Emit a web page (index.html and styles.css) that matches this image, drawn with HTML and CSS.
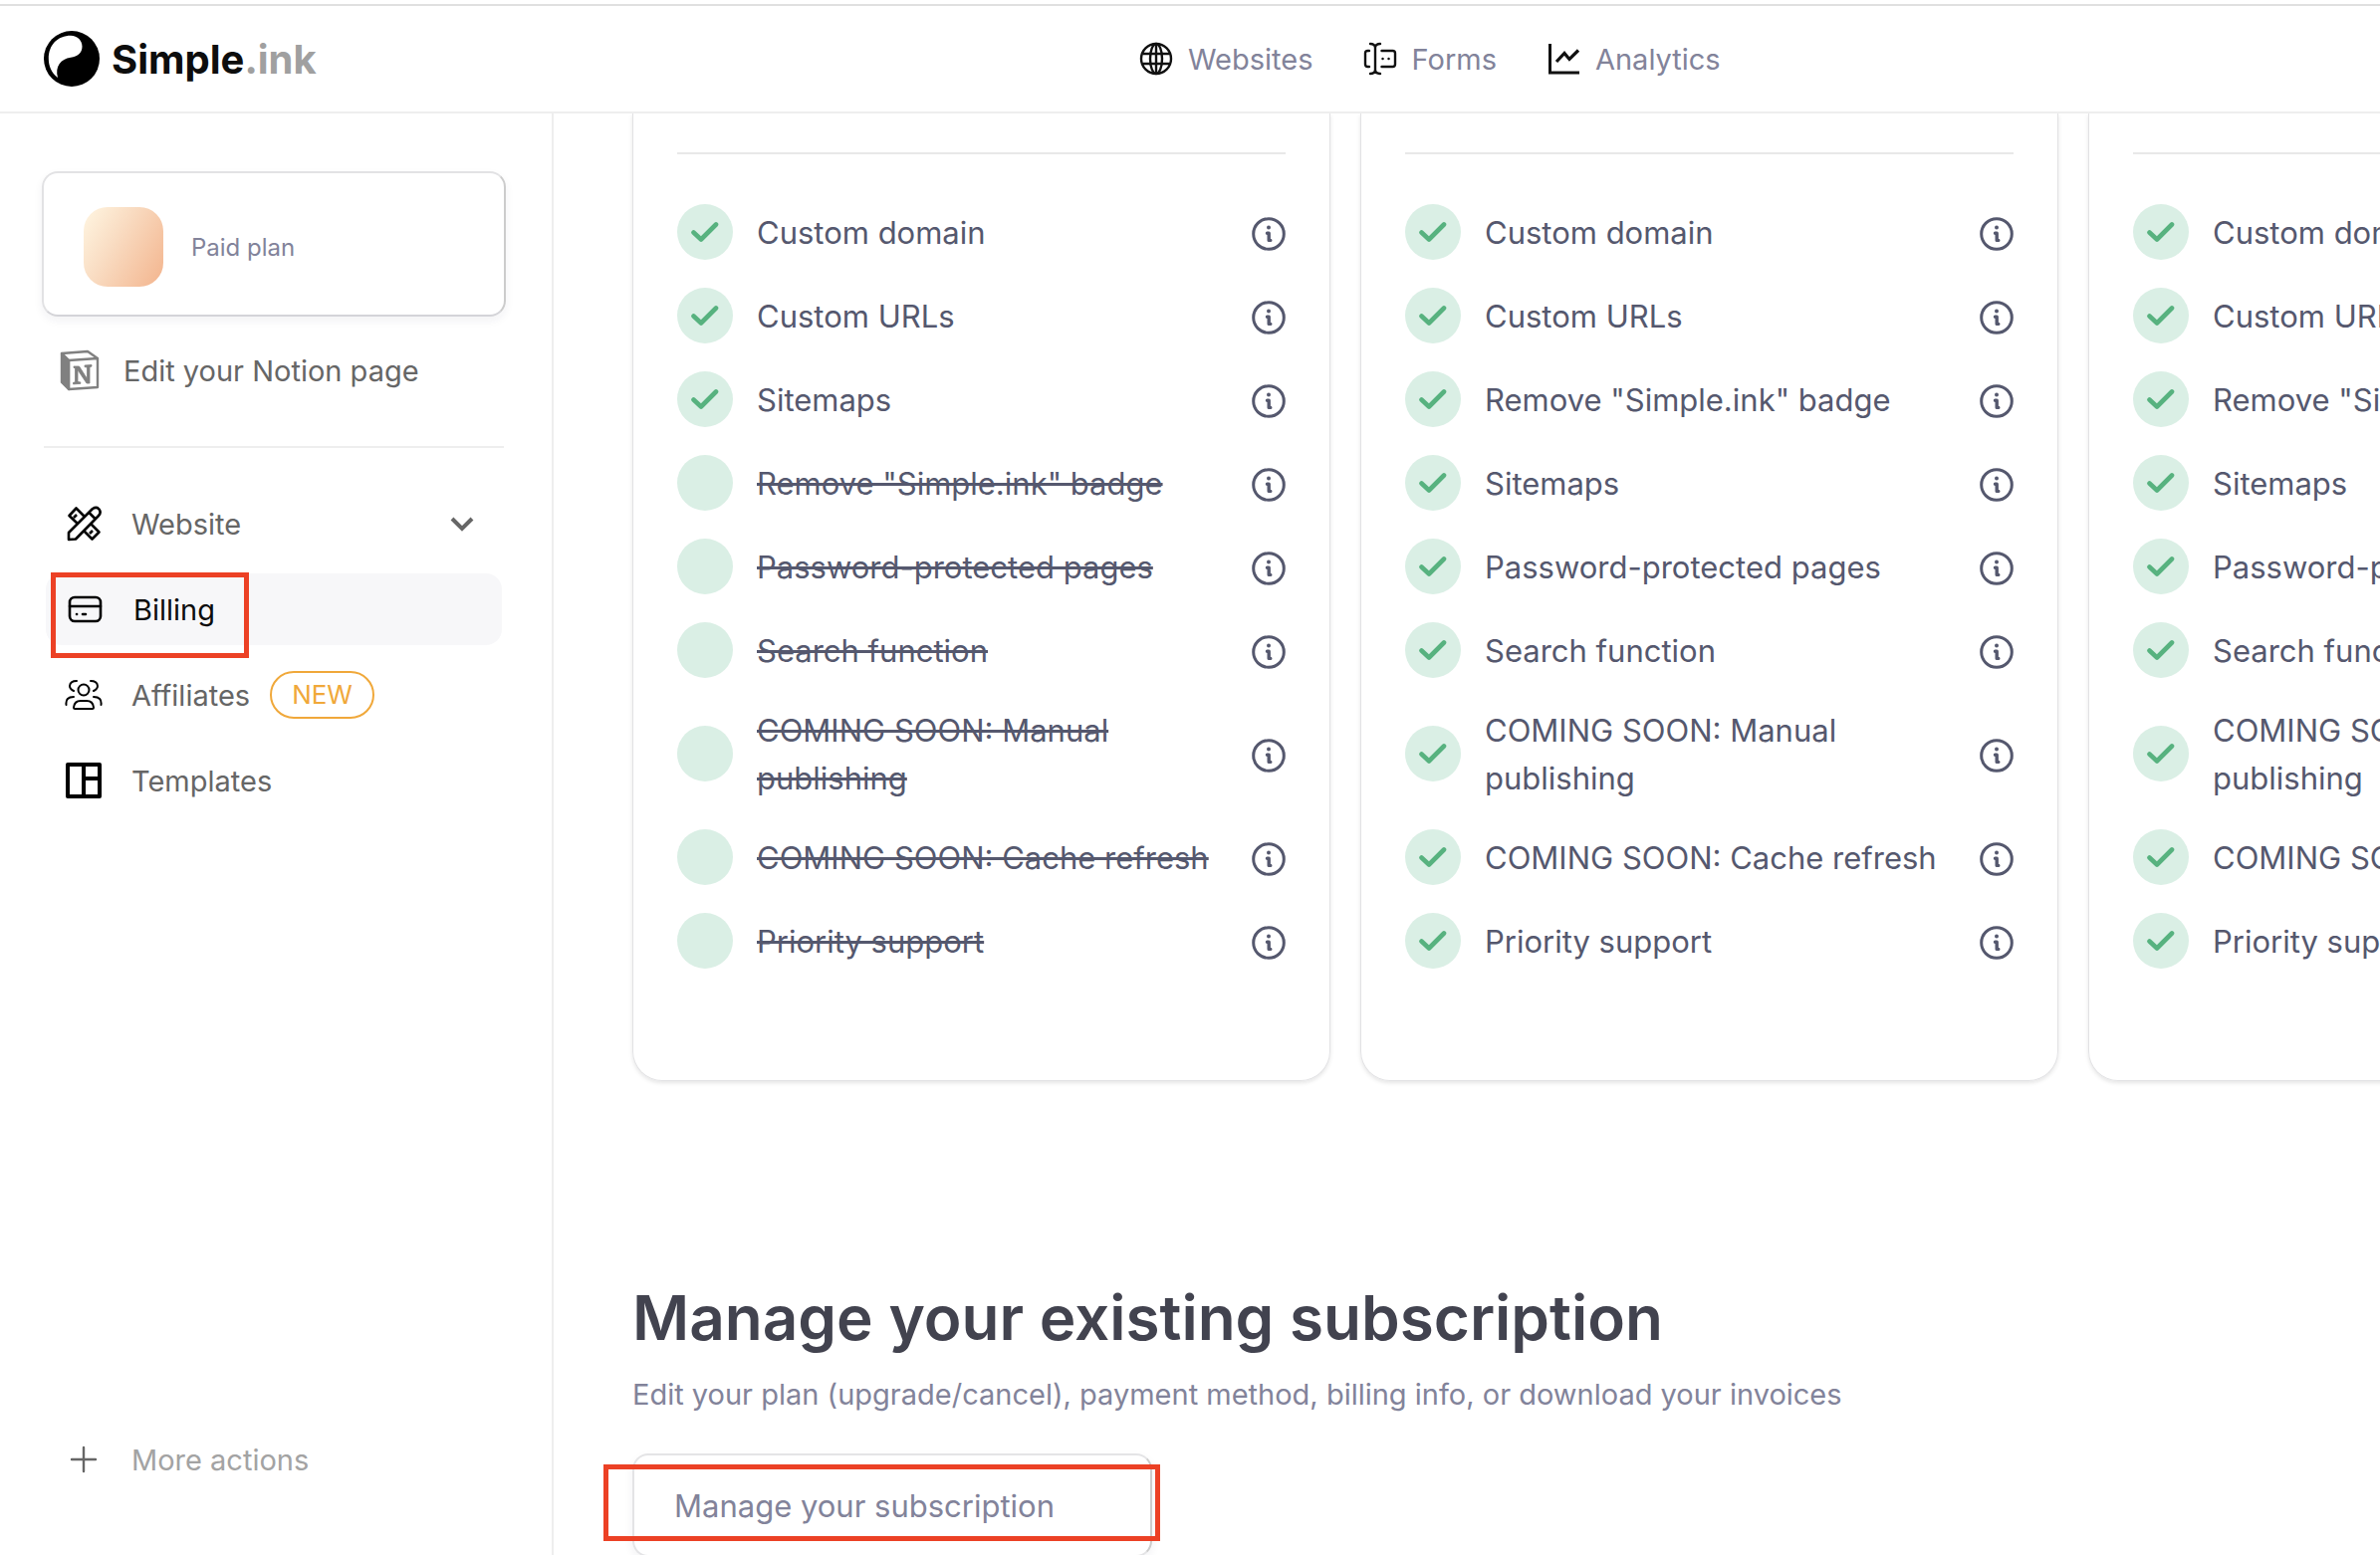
FILE: index.html
```html
<!DOCTYPE html>
<html lang="en">
  <head>
    <meta charset="UTF-8" />
    <meta name="viewport" content="width=device-width, initial-scale=1.0" />
    <title>Billing - Simple.ink</title>
    <link rel="stylesheet" href="styles.css">
  </head>
  <body>
    <!-- Shared icons -->
    <svg class="sprite" aria-hidden="true">
      <symbol id="check" viewBox="0 0 28 20">
        <path d="M2.5 10.5 10 17.5 25 2.5" fill="none" stroke="#57b27f" stroke-width="4.6" stroke-linecap="round" stroke-linejoin="round" />
      </symbol>
      <symbol id="info" viewBox="0 0 34 34">
        <circle cx="17" cy="17" r="15.3" fill="none" stroke="currentColor" stroke-width="3" />
        <circle cx="17" cy="10.5" r="2" fill="currentColor" />
        <path d="M15.5 16.2h1.7v7.2h1.6" fill="none" stroke="currentColor" stroke-width="3.400" stroke-linecap="round" stroke-linejoin="round" />
      </symbol>
    </svg>

    <header class="header">
      <a class="logo" href="#">
        <svg width="56" height="56" viewBox="0 0 56 56">
          <circle cx="28" cy="28" r="28" />
          <path fill="#fff" d="M14 47C7.500 42 4.800 35 4.800 28 4.800 14 14 4.800 27 4.800c7 0 11.500 5 11.500 11 0 6.500-4.500 10-11.500 11-10 1.400-16 9-13 20.200z" />
        </svg>
        <span class="logo-text">Simple<span class="logo-tld">.ink</span></span>
      </a>
      <nav class="nav">
        <a href="#">
          <svg width="34" height="34" viewBox="0 0 34 34" fill="none" stroke="#111" stroke-width="2.400">
            <circle cx="17" cy="17" r="15" />
            <ellipse cx="17" cy="17" rx="6" ry="15" />
            <path d="M17 2v30M3.500 12h27M3.500 22h27" />
          </svg>
          Websites
        </a>
        <a href="#">
          <svg width="34" height="34" viewBox="0 0 34 34" fill="none" stroke="#111" stroke-width="2.400" stroke-linecap="round" stroke-linejoin="round">
            <path d="M7 2c3 0 5 1.500 5 4 0-2.500 2-4 5-4M12 5v24M7 32c3 0 5-1.500 5-4 0 2.500 2 4 5 4M6 9H4.500Q2 9 2 11.500v11Q2 25 4.500 25H6M18.500 9h11Q32 9 32 11.500v11Q32 25 29.500 25h-11M19.500 17h.1M25.500 17h.1" />
          </svg>
          Forms
        </a>
        <a href="#">
          <svg width="34" height="34" viewBox="0 0 34 34" fill="none" stroke="#111" stroke-width="3">
            <path d="M3.500 2v29H33" />
            <path d="M10 20 18 11.500 23 17.500 32 8.500" stroke-width="3.200" />
          </svg>
          Analytics
        </a>
      </nav>
    </header>

    <div class="layout">
      <aside class="sidebar">
        <a class="plan-card" href="#">
          <span class="avatar"></span>
          Paid plan
        </a>
        <a class="notion-link" href="#">
          <svg width="40" height="42" viewBox="0 0 40 42" fill="none" stroke="#808080" stroke-width="2.400" stroke-linejoin="round">
            <path fill="#808080" d="M2 4 9 11V40L2 33z" />
            <path d="M2 4 28 2 38 9 9 11zM9 11 38 9V38L9 40z" />
            <path fill="#808080" stroke-width=".8" d="M14 17h5.500l8 12.500V18l-2.500-.4V16l7-.5v1.600l-2 .6V34h-3l-9-13.500v12l2.800.4v1.500l-7.300.5v-1.600l2-.5V18.700l-1.500-.3z" />
          </svg>
          Edit your Notion page
        </a>
        <hr class="side-line">
        <nav class="menu">
          <a href="#">
            <svg width="38" height="38" viewBox="0 0 38 38" fill="none" stroke="#000" stroke-width="2.600" stroke-linejoin="round">
              <path d="M4 35V28L28 4Q32 1.500 34.500 4.500 37 8 34 11L11 34.500zM24.500 8 31 14.500" />
              <path d="M13 19 4.500 11 11.500 3.500 20 12M9 13l3-3M26 19l8.500 8.500-7 7L19 26M25 29l3-3" />
            </svg>
            Website
            <svg class="chevron" width="24" height="24" viewBox="0 0 24 24" fill="none" stroke="#666" stroke-width="4">
              <path d="M2 7 12 17 22 7" />
            </svg>
          </a>
          <a class="active" href="#">
            <svg width="38" height="38" viewBox="0 0 38 38" fill="none" stroke="#000" stroke-width="2.600" stroke-linecap="round">
              <rect x="3" y="7" width="31" height="24" rx="5" />
              <path d="M3 16h31M10 24h.1M16 24h3" />
            </svg>
            Billing
            <span class="highlight highlight-menu"></span>
          </a>
          <a href="#">
            <svg width="38" height="38" viewBox="0 0 38 38" fill="none" stroke="#000" stroke-width="2" stroke-linecap="round">
              <circle cx="19" cy="14" r="5.500" />
              <path d="M10.500 33q-1.500 0-1.500-1.500C9.500 27 12 25 16 25h6c4 0 6.500 2 7 6.500 0 1.500-1.500 1.500-1.500 1.500zM9 15Q5 13 5 10q.5-5 7-5M29 15q4-2 4-5-.5-5-7-5M1.500 29Q.5 21 9 21M36.500 29q1-8-7.500-8" />
            </svg>
            Affiliates
            <span class="badge">NEW</span>
          </a>
          <a href="#">
            <svg width="38" height="38" viewBox="0 0 38 38" fill="none" stroke="#000" stroke-width="4" stroke-linejoin="round">
              <path d="M3 3h32v32H3zM19 3v32M19 17h16" />
            </svg>
            Templates
          </a>
        </nav>
        <button class="more" type="button">
          <svg width="38" height="38" viewBox="0 0 38 38" fill="none" stroke="#666" stroke-width="2.400" stroke-linecap="round">
            <path d="M19 7v24M7 19h24" />
          </svg>
          More actions
        </button>
      </aside>

      <main class="content">
        <div class="plans">
          <section class="plan">
            <ul class="features">
              <li><span class="tick"><svg><use href="#check" /></svg></span><span class="name">Custom domain</span><button class="info" type="button" aria-label="Info"><svg><use href="#info" /></svg></button></li>
              <li><span class="tick"><svg><use href="#check" /></svg></span><span class="name">Custom URLs</span><button class="info" type="button" aria-label="Info"><svg><use href="#info" /></svg></button></li>
              <li><span class="tick"><svg><use href="#check" /></svg></span><span class="name">Sitemaps</span><button class="info" type="button" aria-label="Info"><svg><use href="#info" /></svg></button></li>
              <li class="off"><span class="tick"></span><span class="name">Remove "Simple.ink" badge</span><button class="info" type="button" aria-label="Info"><svg><use href="#info" /></svg></button></li>
              <li class="off"><span class="tick"></span><span class="name">Password-protected pages</span><button class="info" type="button" aria-label="Info"><svg><use href="#info" /></svg></button></li>
              <li class="off"><span class="tick"></span><span class="name">Search function</span><button class="info" type="button" aria-label="Info"><svg><use href="#info" /></svg></button></li>
              <li class="off"><span class="tick"></span><span class="name">COMING SOON: Manual publishing</span><button class="info" type="button" aria-label="Info"><svg><use href="#info" /></svg></button></li>
              <li class="off"><span class="tick"></span><span class="name">COMING SOON: Cache refresh</span><button class="info" type="button" aria-label="Info"><svg><use href="#info" /></svg></button></li>
              <li class="off"><span class="tick"></span><span class="name">Priority support</span><button class="info" type="button" aria-label="Info"><svg><use href="#info" /></svg></button></li>
            </ul>
          </section>

          <section class="plan">
            <ul class="features">
              <li><span class="tick"><svg><use href="#check" /></svg></span><span class="name">Custom domain</span><button class="info" type="button" aria-label="Info"><svg><use href="#info" /></svg></button></li>
              <li><span class="tick"><svg><use href="#check" /></svg></span><span class="name">Custom URLs</span><button class="info" type="button" aria-label="Info"><svg><use href="#info" /></svg></button></li>
              <li><span class="tick"><svg><use href="#check" /></svg></span><span class="name">Remove "Simple.ink" badge</span><button class="info" type="button" aria-label="Info"><svg><use href="#info" /></svg></button></li>
              <li><span class="tick"><svg><use href="#check" /></svg></span><span class="name">Sitemaps</span><button class="info" type="button" aria-label="Info"><svg><use href="#info" /></svg></button></li>
              <li><span class="tick"><svg><use href="#check" /></svg></span><span class="name">Password-protected pages</span><button class="info" type="button" aria-label="Info"><svg><use href="#info" /></svg></button></li>
              <li><span class="tick"><svg><use href="#check" /></svg></span><span class="name">Search function</span><button class="info" type="button" aria-label="Info"><svg><use href="#info" /></svg></button></li>
              <li><span class="tick"><svg><use href="#check" /></svg></span><span class="name">COMING SOON: Manual publishing</span><button class="info" type="button" aria-label="Info"><svg><use href="#info" /></svg></button></li>
              <li><span class="tick"><svg><use href="#check" /></svg></span><span class="name">COMING SOON: Cache refresh</span><button class="info" type="button" aria-label="Info"><svg><use href="#info" /></svg></button></li>
              <li><span class="tick"><svg><use href="#check" /></svg></span><span class="name">Priority support</span><button class="info" type="button" aria-label="Info"><svg><use href="#info" /></svg></button></li>
            </ul>
          </section>

          <section class="plan">
            <ul class="features">
              <li><span class="tick"><svg><use href="#check" /></svg></span><span class="name">Custom domain</span><button class="info" type="button" aria-label="Info"><svg><use href="#info" /></svg></button></li>
              <li><span class="tick"><svg><use href="#check" /></svg></span><span class="name">Custom URLs</span><button class="info" type="button" aria-label="Info"><svg><use href="#info" /></svg></button></li>
              <li><span class="tick"><svg><use href="#check" /></svg></span><span class="name">Remove "Simple.ink" badge</span><button class="info" type="button" aria-label="Info"><svg><use href="#info" /></svg></button></li>
              <li><span class="tick"><svg><use href="#check" /></svg></span><span class="name">Sitemaps</span><button class="info" type="button" aria-label="Info"><svg><use href="#info" /></svg></button></li>
              <li><span class="tick"><svg><use href="#check" /></svg></span><span class="name">Password-protected pages</span><button class="info" type="button" aria-label="Info"><svg><use href="#info" /></svg></button></li>
              <li><span class="tick"><svg><use href="#check" /></svg></span><span class="name">Search function</span><button class="info" type="button" aria-label="Info"><svg><use href="#info" /></svg></button></li>
              <li><span class="tick"><svg><use href="#check" /></svg></span><span class="name">COMING SOON: Manual publishing</span><button class="info" type="button" aria-label="Info"><svg><use href="#info" /></svg></button></li>
              <li><span class="tick"><svg><use href="#check" /></svg></span><span class="name">COMING SOON: Cache refresh</span><button class="info" type="button" aria-label="Info"><svg><use href="#info" /></svg></button></li>
              <li><span class="tick"><svg><use href="#check" /></svg></span><span class="name">Priority support</span><button class="info" type="button" aria-label="Info"><svg><use href="#info" /></svg></button></li>
            </ul>
          </section>
        </div>

        <section class="manage">
          <h1>Manage your existing subscription</h1>
          <p>Edit your plan (upgrade/cancel), payment method, billing info, or download your invoices</p>
          <div class="manage-action">
            <button class="manage-btn" type="button">Manage your subscription</button>
            <span class="highlight highlight-manage"></span>
          </div>
        </section>
      </main>
    </div>
  </body>
</html>
```

FILE: styles.css
```css
* {
  box-sizing: border-box;
}
body {
  font-family: Inter, "Liberation Sans", sans-serif;
  font-size: 29px;
  margin: 0;
  height: 100vh;
  display: flex;
  flex-direction: column;
  overflow: hidden;
  background: #fff;
  color: #666;
}
a {
  color: inherit;
  text-decoration: none;
}
button {
  font: inherit;
  color: inherit;
  background: none;
  border: 0;
  padding: 0;
  text-align: left;
}
svg {
  flex-shrink: 0;
}
.sprite {
  position: absolute;
  width: 0;
  height: 0;
}

/* Header */
.header {
  display: flex;
  align-items: center;
  flex-shrink: 0;
  height: 110px;
  margin-top: 4px;
  padding-left: 44px;
  border-top: 2px solid #e0e0e0;
  border-bottom: 2px solid #eee;
}
.logo {
  display: flex;
  align-items: center;
  gap: 12px;
  width: 1100px;
}
.logo-text {
  font-size: 40px;
  font-weight: 700;
  color: #0d0d0d;
}
.logo-tld {
  color: #a0a0a0;
}
.nav {
  display: flex;
  gap: 50px;
  color: #82839a;
}
.nav a {
  display: flex;
  align-items: center;
  gap: 15px;
}

.layout {
  display: flex;
  flex: 1;
  min-height: 0;
}

/* Sidebar */
.sidebar {
  display: flex;
  flex-direction: column;
  flex-shrink: 0;
  width: 556px;
  padding: 58px 46px 60px 42px;
  border-right: 2px solid #eee;
}
.plan-card {
  display: flex;
  align-items: center;
  gap: 28px;
  height: 146px;
  padding: 6px 0 0 40px;
  border: 2px solid #e2e2e4;
  border-right-color: #ccc;
  border-bottom-color: #d4d4d8;
  border-radius: 16px;
  box-shadow: 0 4px 10px rgba(30, 30, 60, 0.06);
  font-size: 24px;
  color: #82839a;
}
.avatar {
  width: 80px;
  height: 80px;
  border-radius: 24px;
  background: linear-gradient(120deg, #fff6e2, #f9dcc2 40%, #f3b48d);
}
.notion-link {
  display: flex;
  align-items: center;
  gap: 24px;
  height: 72px;
  margin-top: 18px;
  padding-left: 18px;
}
.side-line {
  width: 462px;
  height: 2px;
  margin: 40px 2px;
  border: 0;
  background: #eee;
}
.menu {
  display: flex;
  flex-direction: column;
  gap: 14px;
}
.menu a {
  position: relative;
  display: flex;
  align-items: center;
  gap: 29px;
  height: 72px;
  margin: 0 4px;
  padding: 0 28px 0 19px;
  border-radius: 16px;
}
.menu .active {
  padding-left: 21px;
  background: #f7f7f9;
  color: #0d0d0d;
}
.chevron {
  margin-left: auto;
}
.badge {
  height: 48px;
  margin-left: -9px;
  padding: 0 20px;
  border: 2px solid #f0a83a;
  border-radius: 24px;
  font-size: 26px;
  line-height: 44px;
  color: #f0a83a;
}
.more {
  display: flex;
  align-items: center;
  gap: 29px;
  height: 72px;
  margin-top: auto;
  padding-left: 23px;
  color: #a3a3a3;
}

/* Plans */
.content {
  flex: 1;
  min-width: 0;
  padding-left: 79px;
  overflow: hidden;
}
.plans {
  display: flex;
  gap: 30px;
}
.plan {
  flex: 0 0 701px;
  padding: 39px 44px 112px;
  border: 1px solid #e2e2e4;
  border-top: 0;
  border-radius: 0 0 30px 30px;
  box-shadow: 0 2px 4px rgba(0, 0, 0, 0.1);
}
.features {
  display: flex;
  flex-direction: column;
  gap: 28px;
  margin: 0;
  padding: 50px 0 0;
  border-top: 2px solid #e8e8e8;
  list-style: none;
  font-size: 31px;
  line-height: 48px;
  color: #55586e;
}
.features li {
  display: flex;
  align-items: center;
  gap: 24px;
}
.tick {
  display: flex;
  align-items: center;
  justify-content: center;
  flex-shrink: 0;
  width: 56px;
  height: 56px;
  border-radius: 50%;
  background: #daefe5;
}
.tick svg {
  width: 28px;
  height: 20px;
}
.name {
  flex: 1;
  margin: 1px 0 -1px;
}
.off .name {
  text-decoration: line-through;
}
.info {
  margin-top: 4px;
}
.info svg {
  display: block;
  width: 34px;
  height: 34px;
}

/* Manage subscription */
.manage {
  padding-top: 197px;
}
.manage h1 {
  margin: 0;
  font-size: 62px;
  font-weight: 600;
  line-height: 82px;
  color: #42434f;
}
.manage p {
  margin: 12px 0 35px;
  line-height: 48px;
  color: #82839a;
}
.manage-action {
  position: relative;
}
.manage-btn {
  width: 522px;
  height: 104px;
  padding-left: 40px;
  border: 2px solid #e4e4e6;
  border-right-color: #ccc;
  border-radius: 16px;
  box-shadow: 0 4px 10px rgba(30, 30, 60, 0.06);
  font-size: 31px;
  color: #82839a;
}

/* Red callout frames */
.highlight {
  position: absolute;
  border: 5px solid #ec4125;
  pointer-events: none;
}
.highlight-menu {
  top: -1px;
  left: 5px;
  width: 199px;
  height: 86px;
}
.highlight-manage {
  top: 11px;
  left: -29px;
  width: 559px;
  height: 77px;
}
```
